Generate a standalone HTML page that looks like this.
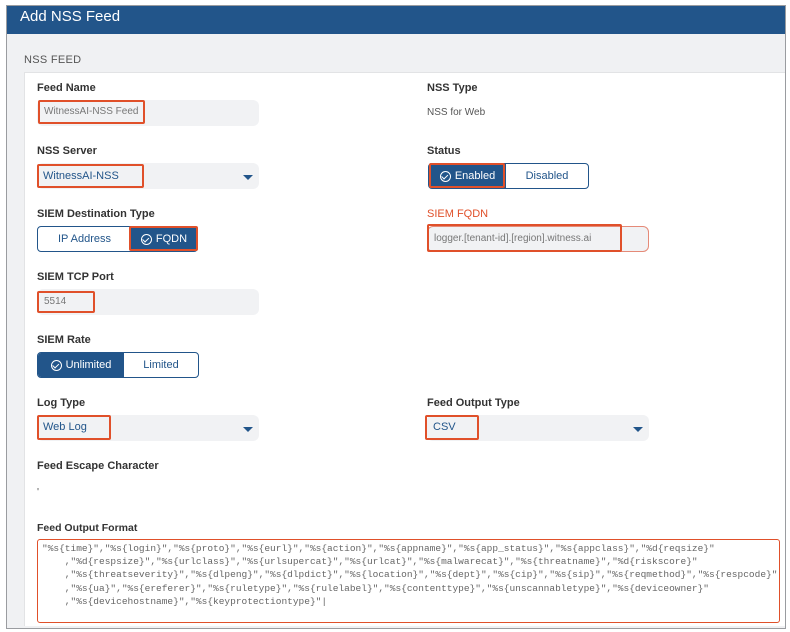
<!DOCTYPE html>
<html><head><meta charset="utf-8"><style>
*{box-sizing:border-box;margin:0;padding:0}
body{width:790px;height:632px;background:#fff;font-family:"Liberation Sans",sans-serif;position:relative;overflow:hidden}
.a{position:absolute}
.frame{left:6px;top:5px;width:780px;height:624px;border:1.5px solid #9a9ca0;background:#f0f1f3}
.hdr{left:7px;top:6px;width:778px;height:28px;background:#22558a;color:#fff;font-size:15px;padding:2px 0 0 13px}
.card{left:24px;top:72px;width:761px;height:554px;background:#fff;border-left:1px solid #e2e3e5;border-top:1px solid #e2e3e5}
.lbl{font-size:11px;color:#333;font-weight:bold}
.inp{background:#f1f2f4;border-radius:6px;height:26px}
.txt{font-size:10.5px}
.red{border:2px solid #e0502a;border-radius:2px}
.arrow{width:0;height:0;border-left:5px solid transparent;border-right:5px solid transparent;border-top:5px solid #22558a}
.tg{border:1px solid #22558a;border-radius:4px;height:26px;display:flex;overflow:hidden;font-size:11px}
.tg div{display:flex;align-items:center;justify-content:center;color:#22558a}
.tg .on{background:#22558a;color:#fff}
.ck{display:inline-block;width:11px;height:11px;border:1.3px solid #fff;border-radius:50%;margin-right:4px;position:relative}
.ck:after{content:"";position:absolute;left:2.5px;top:1.5px;width:2.5px;height:4.5px;border:solid #fff;border-width:0 1.3px 1.3px 0;transform:rotate(45deg)}
.code{font-family:"Liberation Mono",monospace;font-size:9.5px;color:#666;line-height:13.2px;white-space:pre}
</style></head><body>
<div class="a frame"></div>
<div class="a hdr">Add NSS Feed</div>
<div class="a" style="left:24px;top:54px;font-size:11px;color:#555;letter-spacing:.3px">NSS FEED</div>
<div class="a card"></div>

<div class="a lbl" style="left:37px;top:82px">Feed Name</div>
<div class="a inp" style="left:37px;top:100px;width:222px"></div>
<div class="a red" style="left:38px;top:100px;width:107px;height:24px"></div>
<div class="a txt" style="left:44px;top:106px;color:#777;font-size:10px">WitnessAI-NSS Feed</div>

<div class="a lbl" style="left:427px;top:82px">NSS Type</div>
<div class="a txt" style="left:427px;top:107px;color:#555;font-size:10px">NSS for Web</div>

<div class="a lbl" style="left:37px;top:145px">NSS Server</div>
<div class="a inp" style="left:37px;top:163px;width:222px"></div>
<div class="a red" style="left:37px;top:164px;width:107px;height:24px"></div>
<div class="a txt" style="left:43px;top:170px;color:#22558a;font-size:11px">WitnessAI-NSS</div>
<div class="a arrow" style="left:243px;top:175px"></div>

<div class="a lbl" style="left:427px;top:145px">Status</div>
<div class="a tg" style="left:428px;top:163px;width:161px"><div class="on" style="width:77px"><span class="ck"></span>Enabled</div><div style="flex:1">Disabled</div></div>
<div class="a red" style="left:429px;top:163px;width:76px;height:25px"></div>

<div class="a lbl" style="left:37px;top:208px">SIEM Destination Type</div>
<div class="a tg" style="left:37px;top:226px;width:161px"><div style="width:93px">IP Address</div><div class="on" style="flex:1"><span class="ck"></span>FQDN</div></div>
<div class="a red" style="left:129px;top:226px;width:69px;height:25px"></div>

<div class="a lbl" style="left:427px;top:208px;color:#e0502a;font-weight:normal">SIEM FQDN</div>
<div class="a inp" style="left:427px;top:226px;width:222px;border:1px solid #e58a78"></div>
<div class="a red" style="left:427px;top:224px;width:195px;height:28px"></div>
<div class="a txt" style="left:434px;top:233px;color:#777;font-size:10px">logger.[tenant-id].[region].witness.ai</div>

<div class="a lbl" style="left:37px;top:271px">SIEM TCP Port</div>
<div class="a inp" style="left:37px;top:289px;width:222px"></div>
<div class="a red" style="left:37px;top:291px;width:58px;height:22px"></div>
<div class="a txt" style="left:44px;top:296px;color:#777;font-size:10px">5514</div>

<div class="a lbl" style="left:37px;top:334px">SIEM Rate</div>
<div class="a tg" style="left:37px;top:352px;width:162px"><div class="on" style="width:86px"><span class="ck"></span>Unlimited</div><div style="flex:1">Limited</div></div>

<div class="a lbl" style="left:37px;top:397px">Log Type</div>
<div class="a inp" style="left:37px;top:415px;width:222px"></div>
<div class="a red" style="left:37px;top:415px;width:74px;height:25px"></div>
<div class="a txt" style="left:43px;top:421px;color:#22558a;font-size:11px">Web Log</div>
<div class="a arrow" style="left:243px;top:427px"></div>

<div class="a lbl" style="left:427px;top:397px">Feed Output Type</div>
<div class="a inp" style="left:427px;top:415px;width:222px"></div>
<div class="a red" style="left:425px;top:415px;width:54px;height:25px"></div>
<div class="a txt" style="left:433px;top:421px;color:#22558a;font-size:11px">CSV</div>
<div class="a arrow" style="left:633px;top:427px"></div>

<div class="a lbl" style="left:37px;top:460px">Feed Escape Character</div>
<div class="a txt" style="left:37px;top:486px;color:#555">'</div>

<div class="a lbl" style="left:37px;top:522px;font-size:10.5px">Feed Output Format</div>
<div class="a" style="left:37px;top:539px;width:743px;height:84px;border:1.5px solid #e0502a;border-radius:3px"></div>
<div class="a code" style="left:42px;top:542px">"%s{time}","%s{login}","%s{proto}","%s{eurl}","%s{action}","%s{appname}","%s{app_status}","%s{appclass}","%d{reqsize}"
    ,"%d{respsize}","%s{urlclass}","%s{urlsupercat}","%s{urlcat}","%s{malwarecat}","%s{threatname}","%d{riskscore}"
    ,"%s{threatseverity}","%s{dlpeng}","%s{dlpdict}","%s{location}","%s{dept}","%s{cip}","%s{sip}","%s{reqmethod}","%s{respcode}"
    ,"%s{ua}","%s{ereferer}","%s{ruletype}","%s{rulelabel}","%s{contenttype}","%s{unscannabletype}","%s{deviceowner}"
    ,"%s{devicehostname}","%s{keyprotectiontype}"|</div>
</body></html>
